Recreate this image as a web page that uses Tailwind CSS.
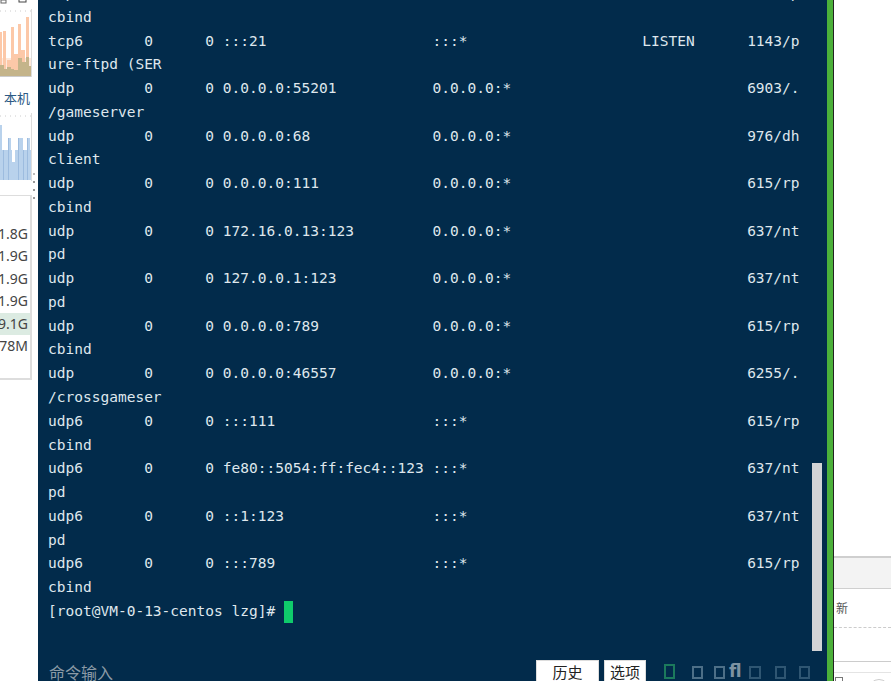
<!DOCTYPE html>
<html lang="en">
<head>
<meta charset="UTF-8">
<title>Terminal</title>
<script src="https://cdn.jsdelivr.net/npm/@tailwindcss/browser@4"></script>
</head>
<body class="bg-white">
<div class="flex w-[891px] h-[681px] overflow-hidden">

  <!-- left monitor panel -->
  <div class="w-[38px] shrink-0 flex flex-col font-['Noto_Sans','Noto_Sans_CJK_SC',sans-serif] text-[#444]">
    <div class="h-[77px] w-[32px] overflow-hidden">
      <svg width="32" height="77" viewBox="0 0 32 77">
        <rect x="1" y="0" width="5" height="3" fill="none" stroke="#666"/>
        <rect x="19" y="-2" width="7" height="4" fill="none" stroke="#444"/>
        <line x1="0" y1="11" x2="31" y2="11" stroke="#ccc" stroke-dasharray="1 4"/>
        <rect x="31" y="9" width="1" height="68" fill="#ddd"/>
        <g fill="#fde9dc">
          <rect x="0" y="58" width="31" height="19"/>
        </g>
        <g fill="#fcc8a8">
          <rect x="0" y="32" width="2" height="45"/><rect x="3" y="31" width="3" height="46"/><rect x="11" y="27" width="3" height="50"/><rect x="18" y="24" width="3" height="53"/><rect x="26" y="17" width="3" height="60"/><rect x="7" y="60" width="4" height="17"/><rect x="14" y="54" width="4" height="23"/><rect x="21" y="50" width="4" height="27"/>
        </g>
        <g fill="#c4b48a">
          <rect x="0" y="65" width="4" height="12"/><rect x="4" y="69" width="3" height="8"/><rect x="7" y="67" width="4" height="10"/><rect x="11" y="69" width="3" height="8"/><rect x="14" y="70" width="4" height="7"/><rect x="18" y="58" width="4" height="19"/><rect x="22" y="62" width="4" height="15"/><rect x="26" y="57" width="3" height="20"/><rect x="29" y="66" width="2" height="11"/>
        </g>
        <rect x="0" y="76" width="31" height="1" fill="#ccc"/>
      </svg>
    </div>
    <div class="h-[36px] flex items-center justify-end pr-[8px] pt-[8px] text-[13px] text-[#2c5a85]">本机</div>
    <div class="h-[68px] w-[32px] overflow-hidden">
      <svg width="32" height="68" viewBox="0 0 32 68">
        <line x1="0" y1="3" x2="31" y2="3" stroke="#ccc" stroke-dasharray="1 4"/>
        <rect x="31" y="0" width="1" height="68" fill="#ddd"/>
        <g fill="#b9d2ec">
          <rect x="0" y="37" width="31" height="30"/><rect x="0" y="12" width="2" height="26"/><rect x="8" y="25" width="3" height="13"/><rect x="18" y="25" width="5" height="13"/><rect x="27" y="25" width="3" height="13"/>
        </g>
        <rect x="12" y="37" width="3" height="12" fill="#fff"/>
        <g fill="#9dbcdf">
          <rect x="3" y="37" width="1" height="30"/><rect x="8" y="25" width="1" height="42"/><rect x="18" y="25" width="1" height="42"/><rect x="23" y="37" width="1" height="30"/><rect x="27" y="25" width="1" height="42"/>
        </g>
      </svg>
    </div>
    <div class="h-[199px] flex">
      <div class="w-[32px] border-r-2 border-b-2 border-[#ddd] flex flex-col pt-[27px] mt-[14px] border-t border-t-[#ddd] text-[14px] leading-[22.4px] overflow-hidden">
        <div class="pr-[2px] whitespace-nowrap flex justify-end">1.8G</div>
        <div class="pr-[2px] whitespace-nowrap flex justify-end">1.9G</div>
        <div class="pr-[2px] whitespace-nowrap flex justify-end">1.9G</div>
        <div class="pr-[2px] whitespace-nowrap flex justify-end">1.9G</div>
        <div class="pr-[2px] whitespace-nowrap flex justify-end bg-[#dcebe2]">9.1G</div>
        <div class="pr-[2px] whitespace-nowrap flex justify-end">78M</div>
      </div>
      <!-- resize handle dots -->
      <div class="flex flex-col gap-[6px] ml-[1px] -mt-[8px]">
        <div class="w-[2px] h-[2px] bg-[#bbb]"></div>
        <div class="w-[2px] h-[2px] bg-[#999]"></div>
        <div class="w-[2px] h-[2px] bg-[#999]"></div>
        <div class="w-[2px] h-[2px] bg-[#999]"></div>
      </div>
    </div>
  </div>

  <!-- terminal -->
  <div class="relative w-[789px] shrink-0 bg-[#022b4b] overflow-hidden">
    <pre class="mt-[-18px] pl-[10px] font-['DejaVu_Sans_Mono',monospace] text-[14.53px] leading-[23.76px] text-[#dfe7ed]">tcp        0      0 0.0.0.0:111             0.0.0.0:*               LISTEN      615/rp
cbind
tcp6       0      0 :::21                   :::*                    LISTEN      1143/p
ure-ftpd (SER
udp        0      0 0.0.0.0:55201           0.0.0.0:*                           6903/.
/gameserver
udp        0      0 0.0.0.0:68              0.0.0.0:*                           976/dh
client
udp        0      0 0.0.0.0:111             0.0.0.0:*                           615/rp
cbind
udp        0      0 172.16.0.13:123         0.0.0.0:*                           637/nt
pd
udp        0      0 127.0.0.1:123           0.0.0.0:*                           637/nt
pd
udp        0      0 0.0.0.0:789             0.0.0.0:*                           615/rp
cbind
udp        0      0 0.0.0.0:46557           0.0.0.0:*                           6255/.
/crossgameser
udp6       0      0 :::111                  :::*                                615/rp
cbind
udp6       0      0 fe80::5054:ff:fec4::123 :::*                                637/nt
pd
udp6       0      0 ::1:123                 :::*                                637/nt
pd
udp6       0      0 :::789                  :::*                                615/rp
cbind
[root@VM-0-13-centos lzg]# <span class="inline-block w-[9px] h-[22px] align-middle bg-[#0fcb6b]"></span></pre>

    <!-- scrollbar -->
    <div class="absolute left-[774px] top-[463px] w-[10px] h-[188px] bg-[#d2d3d5]"></div>

    <!-- bottom bar -->
    <div class="absolute left-0 right-0 top-[660px] h-[21px] flex items-start font-['Noto_Sans_CJK_SC',sans-serif]">
      <span class="ml-[11px] mt-[1px] text-[16px] leading-[22px] text-[#8b9aa6]">命令输入</span>
      <div class="ml-[423px] w-[63px] h-[24px] bg-white border border-[#ddd] flex items-center justify-center text-[15px] text-[#222]">历史</div>
      <div class="ml-[5px] w-[42px] h-[24px] bg-white border border-[#ddd] flex items-center justify-center text-[15px] text-[#222]">选项</div>
      <div class="ml-[18px] mt-[4px] w-[11px] h-[15px] border-2 border-[#1c7a5c]"></div>
      <div class="ml-[17px] mt-[6px] w-[11px] h-[13px] border-2 border-[#4d6f87]"></div>
      <div class="ml-[11px] mt-[6px] w-[11px] h-[13px] border-2 border-[#4d6f87]"></div>
      <span class="ml-[4px] mt-[-1px] font-['DejaVu_Sans',sans-serif] font-bold text-[17px] leading-[24px] text-[#7d93a3]">fl</span>
      <div class="ml-[7px] mt-[6px] w-[12px] h-[13px] border-2 border-[#2f5672]"></div>
      <div class="ml-[14px] mt-[6px] w-[11px] h-[13px] border-2 border-[#2f5672]"></div>
      <div class="ml-[13px] mt-[6px] w-[11px] h-[13px] border-2 border-[#2f5672]"></div>
    </div>
  </div>

  <!-- green window edge -->
  <div class="w-[6px] shrink-0 bg-[#4cb03a]"></div>
  <div class="w-[1px] shrink-0 bg-[#222]"></div>

  <!-- right panel -->
  <div class="flex-1 flex flex-col overflow-hidden font-['Noto_Sans_CJK_SC',sans-serif]">
    <div class="h-[556px] shrink-0"></div>
    <div class="h-[33px] shrink-0 bg-[#f3f3f3] border-t-2 border-b border-[#cfcfcf]"></div>
    <div class="h-[39px] shrink-0 border-b border-dashed border-[#ccc] flex items-center pl-[2px] text-[12px] text-[#555]">新</div>
    <div class="h-[34px] shrink-0 border-b border-[#ccc]"></div>
    <div class="h-[11px] shrink-0 border-b border-[#e4e4e4]"></div>
    <div class="flex justify-between items-start pt-[4px] pl-[1px] pr-[0px]">
      <div class="w-[8px] h-[8px] border border-[#777]"></div>
      <div class="w-[22px] h-[22px] rounded-full border border-[#ccc] mt-[2px] mr-[1px]"></div>
    </div>
  </div>
</div>
</body>
</html>
